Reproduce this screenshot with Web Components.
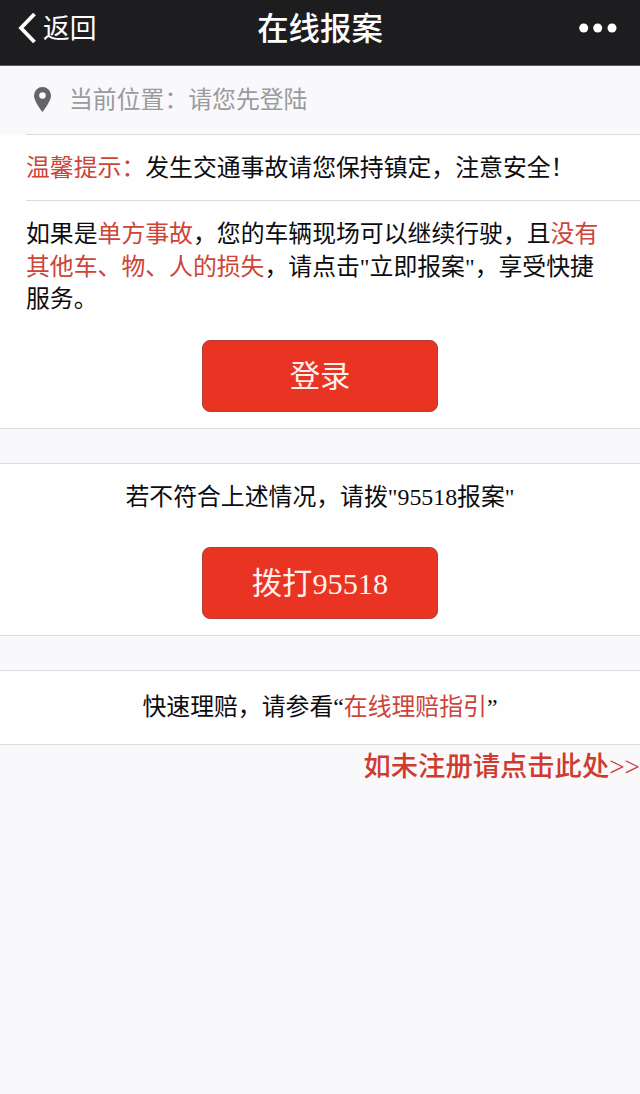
<!DOCTYPE html>
<html lang="zh-CN">
<head>
<meta charset="utf-8">
<meta name="viewport" content="width=device-width, initial-scale=1">
<title>在线报案</title>
<style>
  body {
    margin: 0;
    min-height: 1094px;
    background: #f9f8fb;
    color: #0c0c0e;
    font-family: "Liberation Serif", "Noto Sans CJK SC", sans-serif;
    font-size: 23.85px;
    line-height: 32.7px;
    --red: #cd4438;
    --line: #dddbe0;
  }
</style>
</head>
<body>
  <nav-bar back="返回">在线报案</nav-bar>
  <location-row>当前位置：请您先登陆</location-row>
  <info-panel>
    <tip-row><red-text>温馨提示：</red-text>发生交通事故请您保持镇定，注意安全！</tip-row>
    <text-block>如果是<red-text>单方事故</red-text>，您的车辆现场可以继续行驶，且<red-text>没有<br>其他车、物、人的损失</red-text>，请点击"立即报案"，享受快捷<br>服务。</text-block>
    <action-button>登录</action-button>
  </info-panel>
  <info-panel class="call" framed>
    <text-block center>若不符合上述情况，请拨"95518报案"</text-block>
    <action-button>拨打95518</action-button>
  </info-panel>
  <info-panel class="guide" framed>
    <text-block center>快速理赔，请参看“<red-text>在线理赔指引</red-text>”</text-block>
  </info-panel>
  <register-link>如未注册请点击此处&gt;&gt;</register-link>

<script>
class NavBar extends HTMLElement {
  connectedCallback() {
    this.attachShadow({ mode: 'open' });
    this.shadowRoot.innerHTML = `
      <style>
        :host {
          display: grid;
          grid-template-columns: 1fr auto 1fr;
          align-items: center;
          box-sizing: border-box;
          height: 66px;
          padding: 0 23px 9px 18px;
          background: #1d1c1f;
          border-bottom: 1px solid #59585b;
          color: #fff;
        }
        .back {
          display: flex;
          align-items: center;
          gap: 7px;
          font-size: 26.8px;
        }
        .back span { padding-top: 3px; }
        h1 {
          margin: 0;
          padding: 4px 0 0;
          font-size: 31.4px;
          font-weight: 500;
          line-height: 40px;
        }
        .title { padding-left: 5px; }
        .more { justify-self: end; }
        svg { display: block; }
      </style>
      <div class="back">
        <svg width="18" height="30" viewBox="0 0 18 30" fill="none" stroke="#fff" stroke-width="3.8">
          <path d="M16.500 1L3 15l13.500 14"/>
        </svg>
        <span>${this.getAttribute('back')}</span>
      </div>
      <h1 class="title"><slot></slot></h1>
      <svg class="more" width="38" height="10" viewBox="0 0 38 10" fill="#fff">
        <circle cx="4.700" cy="5" r="4.500"/><circle cx="18.700" cy="5" r="4.500"/><circle cx="33" cy="5" r="4.500"/>
      </svg>
    `;
  }
}
customElements.define('nav-bar', NavBar);

class LocationRow extends HTMLElement {
  connectedCallback() {
    this.attachShadow({ mode: 'open' });
    this.shadowRoot.innerHTML = `
      <style>
        :host {
          display: flex;
          align-items: center;
          gap: 18px;
          height: 68px;
          padding-left: 34px;
          color: #9b9a9d;
        }
        svg { display: block; margin-bottom: 2px; }
      </style>
      <svg width="17" height="25" viewBox="0 0 17 25">
        <path fill="#656467" fill-rule="evenodd" d="M8.500 0A8.500 8.500 0 0 0 0 8.500C0 14.500 8.500 25 8.500 25S17 14.500 17 8.500A8.500 8.500 0 0 0 8.500 0ZM8.500 5.200a3.300 3.300 0 1 1 0 6.600a3.300 3.300 0 0 1 0-6.600Z"/>
      </svg>
      <span><slot></slot></span>
    `;
  }
}
customElements.define('location-row', LocationRow);

class InfoPanel extends HTMLElement {
  connectedCallback() {
    this.attachShadow({ mode: 'open' });
    this.shadowRoot.innerHTML = `
      <style>
        :host {
          display: flex;
          flex-direction: column;
          box-sizing: border-box;
          height: 295px;
          background: #fefefe;
          border-bottom: 1px solid var(--line);
        }
        :host([framed]) {
          margin-top: 34px;
          border-top: 1px solid var(--line);
        }
        :host(.call) { height: 173px; }
        :host(.guide) {
          height: 75px;
          padding-top: 3px;
        }
      </style>
      <slot></slot>
    `;
  }
}
customElements.define('info-panel', InfoPanel);

class TipRow extends HTMLElement {
  connectedCallback() {
    this.attachShadow({ mode: 'open' });
    this.shadowRoot.innerHTML = `
      <style>
        :host {
          display: block;
          box-sizing: border-box;
          height: 67px;
          margin-left: 26px;
          padding-top: 17px;
          border-top: 1px solid var(--line);
          border-bottom: 1px solid var(--line);
          white-space: nowrap;
        }
      </style>
      <slot></slot>
    `;
  }
}
customElements.define('tip-row', TipRow);

class TextBlock extends HTMLElement {
  connectedCallback() {
    this.attachShadow({ mode: 'open' });
    this.shadowRoot.innerHTML = `
      <style>
        :host {
          display: block;
          padding: 17px 0 0 26px;
          white-space: nowrap;
        }
        :host([center]) {
          padding: 17px 0 0;
          text-align: center;
        }
      </style>
      <slot></slot>
    `;
  }
}
customElements.define('text-block', TextBlock);

// inline in running text, so no whitespace around the slot
class RedText extends HTMLElement {
  connectedCallback() {
    this.attachShadow({ mode: 'open' });
    this.shadowRoot.innerHTML = `<style>:host { display: inline; color: var(--red); }</style><slot></slot>`;
  }
}
customElements.define('red-text', RedText);

class ActionButton extends HTMLElement {
  connectedCallback() {
    this.attachShadow({ mode: 'open' });
    this.shadowRoot.innerHTML = `
      <style>
        :host {
          display: block;
          align-self: center;
          margin: auto 0 16px;
        }
        button {
          display: block;
          box-sizing: border-box;
          width: 236px;
          height: 72px;
          padding: 2px 0 0;
          border: 1px solid #b04038;
          border-radius: 8px;
          background: #e93323;
          color: #fff1ec;
          font: inherit;
          font-size: 30.3px;
        }
      </style>
      <button type="button"><slot></slot></button>
    `;
  }
}
customElements.define('action-button', ActionButton);

class RegisterLink extends HTMLElement {
  connectedCallback() {
    this.attachShadow({ mode: 'open' });
    this.shadowRoot.innerHTML = `
      <style>
        :host {
          display: block;
          padding-top: 6px;
          color: #cf3b2f;
          font-size: 27.3px;
          font-weight: 500;
          text-align: right;
        }
      </style>
      <slot></slot>
    `;
  }
}
customElements.define('register-link', RegisterLink);
</script>
</body>
</html>
